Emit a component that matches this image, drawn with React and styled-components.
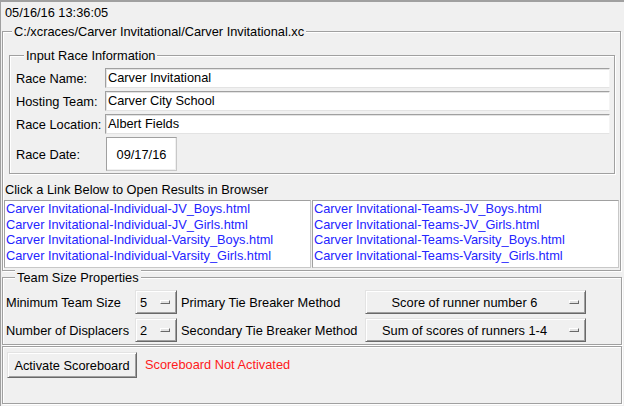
import React from "react";
import styled, { createGlobalStyle, css } from "styled-components";

const GlobalStyle = createGlobalStyle`
  html, body { margin: 0; padding: 0; background: #f0f0f0; }
  body {
    font-family: "Liberation Sans", Arial, sans-serif;
    font-size: 12.8px;
    color: #000;
  }
  * { box-sizing: border-box; }
`;

const raised = css`
  border: 1px solid;
  border-color: #e3e3e3 #696969 #696969 #e3e3e3;
  box-shadow: inset 1px 1px 0 #fff, inset -1px -1px 0 #a0a0a0;
  background: #f0f0f0;
`;

const Window = styled.div`
  width: 624px;
  height: 406px;
  overflow: hidden;
  border-top: 2px solid #a0a0a0;
  border-left: 1px solid #a0a0a0;
  background: #f0f0f0;
  display: flex;
  flex-direction: column;
`;

const Clock = styled.div`
  height: 22px;
  padding: 3px 0 0 4px;
  line-height: 15px;
`;

const Group = styled.fieldset`
  margin: ${(p) => p.$top || 0}px ${(p) => p.$right ?? 2}px 0 ${(p) => p.$left ?? 1}px;
  padding: ${(p) => p.$pad || "0"};
  border: 1px solid #a0a0a0;
  box-shadow: inset 1px 1px 0 #fff, 1px 1px 0 #fff;
  min-inline-size: 0;
`;

const Legend = styled.legend`
  margin-left: ${(p) => p.$indent}px;
  padding: 0 2px;
  line-height: 15px;
  background: #f0f0f0;
`;

const FormGrid = styled.div`
  display: grid;
  grid-template-columns: 89px 1fr;
  row-gap: 3px;
  align-items: center;
`;

const FieldLabel = styled.span`
  line-height: 15px;
  white-space: nowrap;
`;

const Entry = styled.div`
  height: 20px;
  padding: 0 2px;
  line-height: 18px;
  background: #fff;
  border: 1px solid;
  border-color: #a0a0a0 #f4f4f4 #e3e3e3 #a0a0a0;
  box-shadow: inset 1px 1px 0 #e3e3e3;
  white-space: nowrap;
`;

const DateBox = styled.div`
  width: 71px;
  height: 34px;
  margin-left: 1px;
  display: flex;
  align-items: center;
  justify-content: center;
  background: #fff;
  border: 1px solid;
  border-color: #a0a0a0 #c8c8c8 #c8c8c8 #a0a0a0;
  box-shadow: inset -1px -1px 0 #f0f0f0;
`;

const Caption = styled.div`
  margin: 8px 0 3px 2px;
  line-height: 15px;
`;

const LinkGrid = styled.div`
  display: grid;
  grid-template-columns: 307px 307px;
  column-gap: 1px;
  margin-left: 1px;
`;

const LinkBox = styled.div`
  height: 68px;
  padding: 0 1px;
  background: #fff;
  border: 1px solid;
  border-color: #a0a0a0 #c8c8c8 #c8c8c8 #a0a0a0;
`;

const Link = styled.div`
  line-height: 15.5px;
  color: #2424ff;
  white-space: nowrap;
  cursor: pointer;
`;

const PropGrid = styled.div`
  display: grid;
  grid-template-columns: 129px 42px 188px 221px;
  grid-auto-rows: 24px;
  row-gap: 4px;
  align-items: center;
`;

const PropLabel = styled.span`
  padding-left: ${(p) => p.$inset || 0}px;
  white-space: nowrap;
`;

const OptionMenu = styled.div`
  ${raised};
  height: 24px;
  display: flex;
  align-items: center;
  padding: 0 6px 0 ${(p) => p.$padLeft || 0}px;
`;

const OptionText = styled.span`
  flex: 1;
  text-align: ${(p) => (p.$center ? "center" : "left")};
  white-space: nowrap;
`;

const Indicator = styled.span`
  width: 10px;
  height: 4px;
  margin-left: 6px;
  flex: none;
  border: 1px solid;
  border-color: #fff #696969 #696969 #fff;
  background: #e3e3e3;
`;

const ActionBar = styled.div`
  height: 58px;
  margin: 1px 2px 0 1px;
  padding: 5px 4px;
  display: flex;
  align-items: flex-start;
  border: 1px solid #a0a0a0;
  box-shadow: inset 1px 1px 0 #fff, 1px 1px 0 #fff;
`;

const Button = styled.button`
  ${raised};
  width: 130px;
  height: 26px;
  padding: 0;
  font: inherit;
  color: #000;
`;

const Status = styled.span`
  margin-left: 8px;
  line-height: 26px;
  color: #ff1a1a;
`;

const fields = [
  ["Race Name:", "Carver Invitational"],
  ["Hosting Team:", "Carver City School"],
  ["Race Location:", "Albert Fields"],
];

const individual = ["JV_Boys", "JV_Girls", "Varsity_Boys", "Varsity_Girls"];

export default function App() {
  return (
    <Window>
      <GlobalStyle />
      <Clock>05/16/16 13:36:05</Clock>

      <Group $right={3} $pad="0 0 2px 0">
        <Legend $indent={9}>C:/xcraces/Carver Invitational/Carver Invitational.xc</Legend>

        <Group $top={9} $left={6} $right={5} $pad="5px 4px 2px 6px">
          <Legend $indent={8}>Input Race Information</Legend>
          <FormGrid>
            {fields.map(([label, value]) => (
              <React.Fragment key={label}>
                <FieldLabel>{label}</FieldLabel>
                <Entry>{value}</Entry>
              </React.Fragment>
            ))}
            <FieldLabel>Race Date:</FieldLabel>
            <DateBox>09/17/16</DateBox>
          </FormGrid>
        </Group>

        <Caption>Click a Link Below to Open Results in Browser</Caption>
        <LinkGrid>
          <LinkBox>
            {individual.map((n) => (
              <Link key={n}>Carver Invitational-Individual-{n}.html</Link>
            ))}
          </LinkBox>
          <LinkBox>
            {individual.map((n) => (
              <Link key={n}>Carver Invitational-Teams-{n}.html</Link>
            ))}
          </LinkBox>
        </LinkGrid>
      </Group>

      <Group $top={-1} $pad="5px 0 2px 3px">
        <Legend $indent={9}>Team Size Properties</Legend>
        <PropGrid>
          <PropLabel>Minimum Team Size</PropLabel>
          <OptionMenu $padLeft={4}>
            <OptionText>5</OptionText>
            <Indicator />
          </OptionMenu>
          <PropLabel $inset={4}>Primary Tie Breaker Method</PropLabel>
          <OptionMenu>
            <OptionText $center>Score of runner number 6</OptionText>
            <Indicator />
          </OptionMenu>

          <PropLabel>Number of Displacers</PropLabel>
          <OptionMenu $padLeft={4}>
            <OptionText>2</OptionText>
            <Indicator />
          </OptionMenu>
          <PropLabel $inset={4}>Secondary Tie Breaker Method</PropLabel>
          <OptionMenu>
            <OptionText $center>Sum of scores of runners 1-4</OptionText>
            <Indicator />
          </OptionMenu>
        </PropGrid>
      </Group>

      <ActionBar>
        <Button>Activate Scoreboard</Button>
        <Status>Scoreboard Not Activated</Status>
      </ActionBar>
    </Window>
  );
}
